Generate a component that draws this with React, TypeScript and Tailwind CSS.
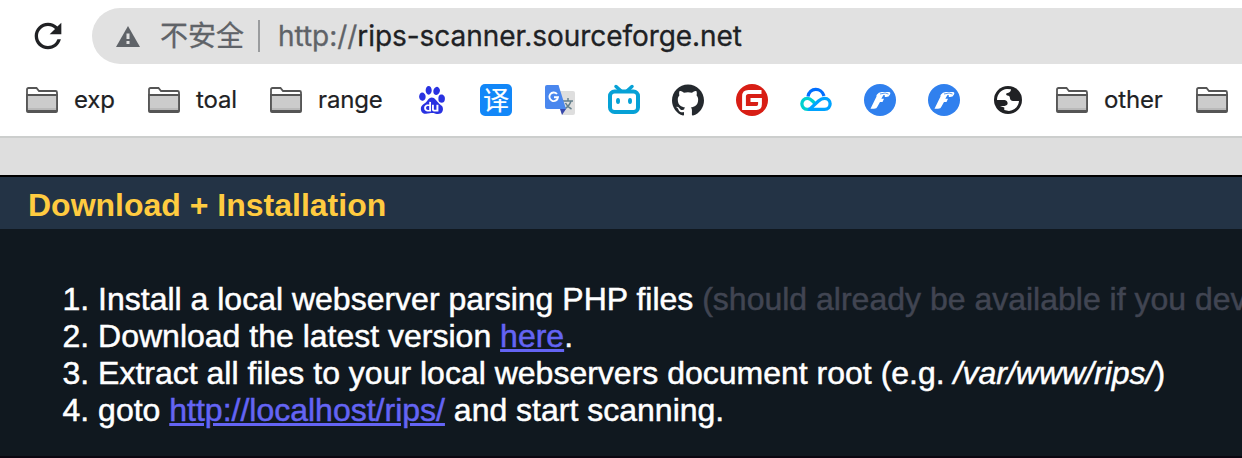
import { SiBaidu, SiGithub } from "react-icons/si";
import { MdRefresh } from "react-icons/md";

function Folder() {
  return (
    <svg className="h-8 w-8 shrink-0" viewBox="0 0 32 32">
      <path d="M1 27V5.500Q1 4 2.500 4H10.500L13 7H29.500Q31 7 31 8.500V27Q31 28 30 28H2Q1 28 1 27Z" fill="#fff" stroke="#555" strokeWidth="1.8" />
      <path d="M1 11H31V26Q31 27 30 27H2Q1 27 1 26Z" fill="#ccc" stroke="#555" strokeWidth="1.8" />
      <path d="M2 25H30" stroke="#b4b4b4" strokeWidth="1.500" />
    </svg>
  );
}

function Translate() {
  return (
    <div className="flex h-8 w-8 shrink-0 items-center justify-center rounded-[5px] bg-[#1287f8] font-['Noto_Sans_CJK_SC',sans-serif] text-[26px] leading-none text-white">
      <span className="-mt-[3px]">译</span>
    </div>
  );
}

function GoogleTranslate() {
  return (
    <svg className="h-8 w-8 shrink-0" viewBox="0 0 32 32">
      <path d="M14 7H29Q31 7 31 9V29Q31 31 29 31H18Z" fill="#dedede" />
      <path d="M19 17H29M24 14V17M27 17Q25.500 22 20.500 25M21.500 19Q23 22.500 27.500 25" fill="none" stroke="#637f8b" strokeWidth="1.500" />
      <path d="M16 25H22L18 31Z" fill="#3949ab" />
      <path d="M3 1H14.500L22 25H3Q1 25 1 23V3Q1 1 3 1Z" fill="#4a87ee" />
      <path d="M13 10A4.300 4.300 0 1 0 14 13.200H10" fill="none" stroke="#fff" strokeWidth="1.900" />
    </svg>
  );
}

function Bilibili() {
  return (
    <svg className="h-8 w-8 shrink-0" viewBox="0 0 32 32">
      <path d="M8 2.500L13 7M24 2.500L19 7" stroke="#06a1d6" strokeWidth="3.500" strokeLinecap="round" />
      <rect x="2" y="7.500" width="28" height="20.500" rx="4.500" fill="#fff" stroke="#06a1d6" strokeWidth="4" />
      <ellipse cx="10" cy="17" rx="2" ry="3" fill="#06a1d6" />
      <ellipse cx="22" cy="17" rx="2" ry="3" fill="#06a1d6" />
    </svg>
  );
}

function Gitee() {
  return (
    <svg className="h-8 w-8 shrink-0" viewBox="0 0 32 32">
      <circle cx="16" cy="16" r="16" fill="#d81e15" />
      <path d="M25.500 8H12.500Q8 8 8 12.500V24H20.500Q24 24 24 20V16H14.500" fill="none" stroke="#fff" strokeWidth="3.800" />
      <path d="M14 19.500H20" stroke="#d81e15" strokeWidth="2" />
    </svg>
  );
}

function TencentCloud() {
  return (
    <svg className="h-8 w-8 shrink-0" viewBox="0 0 32 32" fill="none" strokeWidth="3.300">
      <path d="M8 12.500C9.500 3.200 21.500 3.200 24 12" stroke="#006eff" />
      <path d="M16 20.500L12.500 17C10.800 15.300 9.500 14.300 7.500 14.300C0 14.300 0 25.400 7.500 25.400H10" stroke="#00d0cf" />
      <path d="M8 25.400H24.500C32 25.400 32 14.300 24.500 14.300C22 14.300 20.500 15.200 18.500 17L9.500 25.400" stroke="#00a3ff" />
    </svg>
  );
}

function BlueF() {
  return (
    <svg className="h-8 w-8 shrink-0" viewBox="0 0 32 32">
      <circle cx="16" cy="16" r="16" fill="#3080ee" />
      <path d="M13 10.500Q14.500 8 17.500 8H25Q27 8 26 10.500Q25 13 22 13H20.500Q22 11 19.500 11L17.300 14.700H20L18.500 18H16L13.500 22.500Q12.800 24.800 10 24.800H6.500L12.500 12.500Q12 12 13 10.500Z" fill="#fff" />
      <path d="M16 10Q22 8 24.500 10" fill="none" stroke="#3080ee" strokeWidth=".8" />
    </svg>
  );
}

function Globe() {
  return (
    <svg className="h-8 w-8 shrink-0" viewBox="0 0 32 32">
      <circle cx="16" cy="16" r="14" fill="#202124" />
      <path d="M5 16C5 10 9.500 5.200 15 5L19 5.300C18.800 8 17.500 8.600 14.700 9.200C13.800 10 14 11.300 15.200 11.500C17.300 11.500 17.800 12.200 18 14.500C18.300 16 19.300 17 21 17H27C26.500 22.300 22.500 26.500 17 27L12.300 26V23.500L8 22H12.500C15 21.800 16 20.300 15.500 18.500C15 16.500 13.500 16 11 16Z" fill="#fff" />
    </svg>
  );
}

export default function App() {
  return (
    <div className="flex h-[458px] w-[1242px] flex-col overflow-hidden bg-[#10181f] whitespace-nowrap">
      <header className="flex h-[138px] shrink-0 flex-col border-b-2 border-[#cccecd] bg-white font-['Inter','Noto_Sans_CJK_SC',sans-serif] text-[#202124]">
        <div className="flex h-[72px] items-center pl-[28px]">
          <MdRefresh className="h-10 w-10 shrink-0" />
          <div className="ml-6 flex h-14 flex-1 items-center rounded-l-full bg-[#e1e1e1] pl-[24px] text-[28px]">
            <svg className="mt-[2px] h-6 w-6" viewBox="0 0 24 24">
              <path d="M12 1L24 22H0Z" fill="#5f6368" />
              <path d="M10.500 8.500H13.500V14H10.500ZM10.500 16H13.500V19H10.500Z" fill="#e1e1e1" />
            </svg>
            <span className="ml-[20px] w-[84px] text-[28px] text-[#5f6368] [-webkit-text-stroke:0.3px]">不安全</span>
            <span className="ml-[14px] h-8 w-[2px] bg-[#9a9c9e]" />
            <span className="ml-[18px] tracking-[-0.05px] [-webkit-text-stroke:0.3px]">
              <span className="text-[#5f6368]">http://</span>rips-scanner.sourceforge.net
            </span>
          </div>
        </div>
        <nav className="flex h-14 items-center gap-8 pl-[26px] text-2xl tracking-[-0.15px] [-webkit-text-stroke:0.2px]">
          <div className="flex items-center gap-4"><Folder /><span className="w-[42px]">exp</span></div>
          <div className="flex items-center gap-4"><Folder /><span className="w-[42px]">toal</span></div>
          <div className="flex items-center gap-4"><Folder /><span className="w-[66px]">range</span></div>
          <SiBaidu className="h-8 w-8 shrink-0 p-[2px] text-[#2932e1]" />
          <Translate />
          <GoogleTranslate />
          <Bilibili />
          <SiGithub className="h-8 w-8 shrink-0 text-[#24292e]" />
          <Gitee />
          <TencentCloud />
          <BlueF />
          <BlueF />
          <Globe />
          <div className="flex items-center gap-4"><Folder /><span className="w-[60px]">other</span></div>
          <Folder />
        </nav>
      </header>
      <div className="h-[37px] shrink-0 bg-[#dedede]" />
      <main className="flex-1 border-t-2 border-black font-['Liberation_Sans',Arial,sans-serif] text-[32px] leading-[37px] text-white">
        <h1 className="h-[52px] bg-[#233345] pt-[10px] pl-[28px] font-bold text-[#ffcb40]">Download + Installation</h1>
        <ol className="flex h-[229px] list-none flex-col border-b-2 border-[#0a0710] pt-[52px] pl-[62.5px] [-webkit-text-stroke:0.5px]">
          <li>1. Install a local webserver parsing PHP files <span className="text-[#414552]">(should already be available if you dev</span></li>
          <li>2. Download the latest version <a className="text-[#6464f4] underline decoration-[3px]">here</a>.</li>
          <li>3. Extract all files to your local webservers document root (e.g. <em>/var/www/rips/</em>)</li>
          <li>4. goto <a className="text-[#6464f4] underline decoration-[3px]">http://localhost/rips/</a> and start scanning.</li>
        </ol>
      </main>
    </div>
  );
}
